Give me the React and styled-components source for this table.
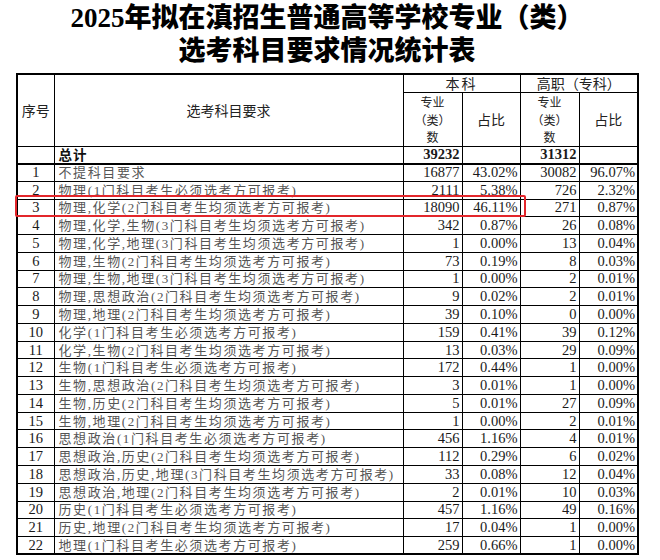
import React from 'react';
import styled, { createGlobalStyle } from 'styled-components';

const GlobalStyle = createGlobalStyle`
  body {
    margin: 0;
    background: #fff;
    color: #111;
    font-family: "Liberation Serif", "Noto Sans CJK SC", serif;
  }
`;

const Page = styled.div`
  width: 660px;
  padding: 2px 0 0 16px;
  box-sizing: border-box;
`;

const Title = styled.h1`
  width: 622px;
  margin: 0 0 5px;
  text-align: center;
  font-family: "Liberation Serif", "Noto Sans CJK SC", serif;
  font-size: 27px;
  font-weight: 900;
  line-height: 33px;
  color: #000;
`;

const Frame = styled.div`
  position: relative;
  width: 622px;
`;

const Table = styled.table`
  width: 622px;
  table-layout: fixed;
  border-collapse: collapse;
  border: 2px solid #000;
`;

const Row = styled.tr`
  height: ${p => p.$h || 17.77}px;
`;

const Head = styled.th`
  border: 1px solid #000;
  border-left-width: 1.5px;
  border-right-width: 1.5px;
  padding: 0;
  font-family: "Noto Sans CJK SC", sans-serif;
  font-size: ${p => p.$small ? 12 : 14}px;
  font-weight: 400;
  line-height: ${p => p.$small ? 17.5 : 17}px;
  letter-spacing: ${p => p.$spaced ? '2px' : '0'};
  color: #222;
  text-align: center;
  vertical-align: middle;
`;

const Cell = styled.td`
  border: 1px solid #000;
  border-left-width: 1.5px;
  border-right-width: 1.5px;
  ${p => p.$thick && 'border-bottom-width: 2px;'}
  padding: 0 ${p => p.$align === 'right' ? '2px' : '0'} 0 ${p => p.$align === 'left' ? '4px' : '0'};
  font-family: "Liberation Serif", "Noto Sans CJK SC", serif;
  font-size: 14.5px;
  font-weight: ${p => p.$bold ? 700 : 400};
  line-height: 15px;
  color: #1a1a1a;
  text-align: ${p => p.$align || 'center'};
  vertical-align: middle;
  white-space: nowrap;
`;

const Requirement = styled.span`
  font-family: "Liberation Serif", "Noto Sans CJK SC", serif;
  font-size: 13px;
  line-height: 15px;
  letter-spacing: 1.6px;
  color: #555;
`;

const TotalLabel = styled.span`
  font-family: "Noto Sans CJK SC", sans-serif;
  font-size: 13.5px;
  line-height: 15px;
  font-weight: 700;
  letter-spacing: 1px;
  color: #111;
`;

const Highlight = styled.div`
  position: absolute;
  left: -1px;
  top: 122px;
  width: 511px;
  height: 22px;
  border: 2px solid #e3262b;
  border-radius: 2px;
  box-sizing: border-box;
  pointer-events: none;
`;

const one = '科目考生必须选考方可报考';
const many = '科目考生均须选考方可报考';

const rows = [
  ['不提科目要求', null, 16877, '43.02%', 30082, '96.07%'],
  ['物理', 1, 2111, '5.38%', 726, '2.32%'],
  ['物理,化学', 2, 18090, '46.11%', 271, '0.87%'],
  ['物理,化学,生物', 3, 342, '0.87%', 26, '0.08%'],
  ['物理,化学,地理', 3, 1, '0.00%', 13, '0.04%'],
  ['物理,生物', 2, 73, '0.19%', 8, '0.03%'],
  ['物理,生物,地理', 3, 1, '0.00%', 2, '0.01%'],
  ['物理,思想政治', 2, 9, '0.02%', 2, '0.01%'],
  ['物理,地理', 2, 39, '0.10%', 0, '0.00%'],
  ['化学', 1, 159, '0.41%', 39, '0.12%'],
  ['化学,生物', 2, 13, '0.03%', 29, '0.09%'],
  ['生物', 1, 172, '0.44%', 1, '0.00%'],
  ['生物,思想政治', 2, 3, '0.01%', 1, '0.00%'],
  ['生物,历史', 2, 5, '0.01%', 27, '0.09%'],
  ['生物,地理', 2, 1, '0.00%', 2, '0.01%'],
  ['思想政治', 1, 456, '1.16%', 4, '0.01%'],
  ['思想政治,历史', 2, 112, '0.29%', 6, '0.02%'],
  ['思想政治,历史,地理', 3, 33, '0.08%', 12, '0.04%'],
  ['思想政治,地理', 2, 2, '0.01%', 10, '0.03%'],
  ['历史', 1, 457, '1.16%', 49, '0.16%'],
  ['历史,地理', 2, 17, '0.04%', 1, '0.00%'],
  ['地理', 1, 259, '0.66%', 1, '0.00%'],
];

function label(subjects, n) {
  if (!n) return subjects;
  return `${subjects}(${n}门${n === 1 ? one : many})`;
}

export default function App() {
  return (
    <Page>
      <GlobalStyle />
      <Title>
        2025年拟在滇招生普通高等学校专业（类）
        <br />
        选考科目要求情况统计表
      </Title>
      <Frame>
        <Table>
          <colgroup>
            <col style={{ width: 37 }} />
            <col style={{ width: 349 }} />
            <col style={{ width: 59 }} />
            <col style={{ width: 58 }} />
            <col style={{ width: 59 }} />
            <col style={{ width: 59 }} />
          </colgroup>
          <thead>
            <Row $h={18}>
              <Head rowSpan={2}>序号</Head>
              <Head rowSpan={2}>选考科目要求</Head>
              <Head colSpan={2} $spaced>本科</Head>
              <Head colSpan={2}>高职（专科）</Head>
            </Row>
            <Row $h={53}>
              <Head $small>专业<br />（类）<br />数</Head>
              <Head>占比</Head>
              <Head $small>专业<br />（类）<br />数</Head>
              <Head>占比</Head>
            </Row>
          </thead>
          <tbody>
            <Row $h={17}>
              <Cell $thick />
              <Cell $thick $align="left"><TotalLabel>总计</TotalLabel></Cell>
              <Cell $thick $align="right" $bold>39232</Cell>
              <Cell $thick />
              <Cell $thick $align="right" $bold>31312</Cell>
              <Cell $thick />
            </Row>
            {rows.map(([subjects, n, a, ap, b, bp], i) => (
              <Row key={i}>
                <Cell>{i + 1}</Cell>
                <Cell $align="left"><Requirement>{label(subjects, n)}</Requirement></Cell>
                <Cell $align="right">{a}</Cell>
                <Cell $align="right">{ap}</Cell>
                <Cell $align="right">{b}</Cell>
                <Cell $align="right">{bp}</Cell>
              </Row>
            ))}
          </tbody>
        </Table>
        <Highlight />
      </Frame>
    </Page>
  );
}
